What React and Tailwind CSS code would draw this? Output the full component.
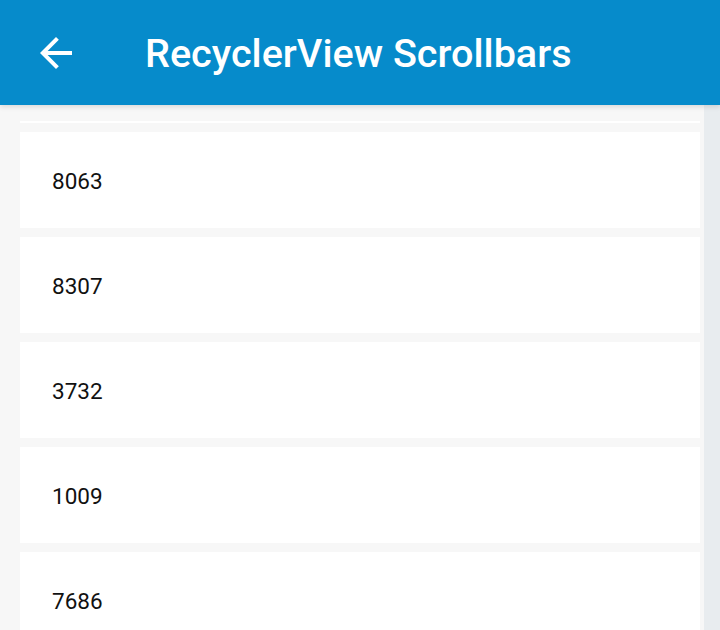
export default function App() {
  const items = ['8063', '8307', '3732', '1009', '7686', '4410'];

  return (
    <div className="w-[720px] h-[630px] overflow-hidden flex flex-col bg-[#f7f7f7] font-['Roboto',sans-serif]">
      {/* App bar */}
      <header className="relative z-10 h-[105px] shrink-0 bg-[#068bcb] flex items-center pl-8 shadow-[0_2px_5px_rgba(0,0,0,0.12)]">
        <svg viewBox="0 0 24 24" className="w-12 h-12 fill-white">
          <path d="M20 11H7.83l5.59-5.59L12 4l-8 8 8 8 1.41-1.41L7.83 13H20v-2z" />
        </svg>
        <h1 className="ml-[65px] text-white text-[39.6px] font-medium leading-none mt-[2px]">
          RecyclerView Scrollbars
        </h1>
      </header>

      {/* List + scrollbar track */}
      <div className="flex-1 flex overflow-hidden">
        <div className="flex-1 pl-5 pr-1 pt-4 overflow-hidden">
          <div className="flex flex-col gap-[9px]">
            {/* bottom edge of the item scrolled under the app bar */}
            <div className="h-[2px] shrink-0 bg-white" />
            {items.map((n) => (
              <div key={n} className="h-[96px] shrink-0 bg-white flex items-center pl-8">
                <span className="text-[22.5px] text-[#111] mt-[3px]">{n}</span>
              </div>
            ))}
          </div>
        </div>
        <div className="w-4 bg-[#e8ecef]" />
      </div>
    </div>
  );
}
